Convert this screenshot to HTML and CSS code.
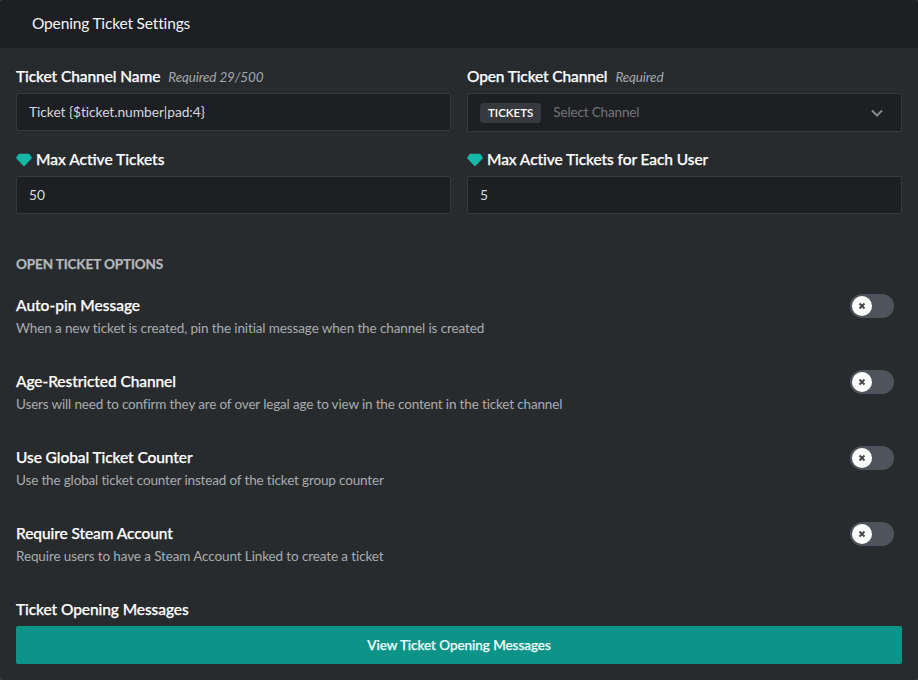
FILE: index.html
```
<!DOCTYPE html>
<html lang="en">
<head>
<meta charset="utf-8">
<title>Opening Ticket Settings</title>
<link rel="stylesheet" href="styles.css">
</head>
<body>
<main class="panel">
  <header class="panel-header">Opening Ticket Settings</header>
  <div class="panel-body">
    <div class="fields">
      <div class="field">
        <div class="label"><span>Ticket Channel Name</span><em class="hint">Required 29/500</em></div>
        <div class="input wide-text">Ticket {$ticket.number|pad:4}</div>
      </div>
      <div class="field">
        <div class="label tight"><span>Open Ticket Channel</span><em class="hint">Required</em></div>
        <div class="input select">
          <span class="tag">TICKETS</span>
          <span class="placeholder">Select Channel</span>
          <svg class="chevron" width="14" height="14" viewBox="0 0 14 14"><path d="M2 4.5 7 9.5 12 4.5"/></svg>
        </div>
      </div>
      <div class="field">
        <div class="label loose"><svg class="gem" width="16" height="14" viewBox="0 0 16 14"><path d="M3.4.8h9.2q.6 0 1 .5l2 3q.4.6 0 1.2L8.8 12.8q-.8.8-1.6 0L.4 5.5q-.4-.6 0-1.2l2-3q.4-.5 1-.5z"/></svg><span>Max Active Tickets</span></div>
        <div class="input">50</div>
      </div>
      <div class="field">
        <div class="label"><svg class="gem" width="16" height="14" viewBox="0 0 16 14"><path d="M3.4.8h9.2q.6 0 1 .5l2 3q.4.6 0 1.2L8.8 12.8q-.8.8-1.6 0L.4 5.5q-.4-.6 0-1.2l2-3q.4-.5 1-.5z"/></svg><span>Max Active Tickets for Each User</span></div>
        <div class="input">5</div>
      </div>
    </div>
    <h2 class="section-title">OPEN TICKET OPTIONS</h2>
    <div class="options">
      <div class="option">
        <div><div class="label loose">Auto-pin Message</div><p class="desc desc-loose">When a new ticket is created, pin the initial message when the channel is created</p></div>
        <span class="toggle"><span class="knob"><svg width="8" height="8" viewBox="0 0 8 8"><path d="M1.5 1.5l5 5M6.5 1.5l-5 5"/></svg></span></span>
      </div>
      <div class="option">
        <div><div class="label">Age-Restricted Channel</div><p class="desc">Users will need to confirm they are of over legal age to view in the content in the ticket channel</p></div>
        <span class="toggle"><span class="knob"><svg width="8" height="8" viewBox="0 0 8 8"><path d="M1.5 1.5l5 5M6.5 1.5l-5 5"/></svg></span></span>
      </div>
      <div class="option">
        <div><div class="label">Use Global Ticket Counter</div><p class="desc">Use the global ticket counter instead of the ticket group counter</p></div>
        <span class="toggle"><span class="knob"><svg width="8" height="8" viewBox="0 0 8 8"><path d="M1.5 1.5l5 5M6.5 1.5l-5 5"/></svg></span></span>
      </div>
      <div class="option">
        <div><div class="label">Require Steam Account</div><p class="desc desc-loose">Require users to have a Steam Account Linked to create a ticket</p></div>
        <span class="toggle"><span class="knob"><svg width="8" height="8" viewBox="0 0 8 8"><path d="M1.5 1.5l5 5M6.5 1.5l-5 5"/></svg></span></span>
      </div>
    </div>
    <div class="label messages-label">Ticket Opening Messages</div>
    <button class="button" type="button">View Ticket Opening Messages</button>
  </div>
</main>
</body>
</html>
```
FILE: styles.css
```
* { box-sizing: border-box; }
body {
  margin: 0;
  background: #3a3d41;
  color: #fff;
  font-family: Lato, "Noto Sans", sans-serif;
}
.panel {
  height: 680px;
  background: #282b2e;
  border-radius: 4px;
  overflow: hidden;
}
.panel-header {
  height: 48px;
  padding: 0 32px;
  background: #1e1f22;
  color: #f4f4f5;
  font-size: 15.5px;
  line-height: 46px;
  letter-spacing: -.16px;
}
.panel-body { padding: 17px 16px 0; }
.fields {
  display: grid;
  grid-template-columns: 1fr 1fr;
  grid-template-rows: 66px 83px;
  row-gap: 17px;
  column-gap: 16px;
}
.label {
  display: flex;
  align-items: center;
  height: 24px;
  padding-bottom: 2px;
  font-size: 15.5px;
  font-weight: 500;
  letter-spacing: -.08px;
  white-space: nowrap;
  -webkit-text-stroke: .25px;
}
.label.tight { letter-spacing: -.13px; }
.label.loose { letter-spacing: 0; }
.hint {
  margin-top: 2px;
  margin-left: 8px;
  color: #a5a8ac;
  font-size: 13.5px;
  font-weight: 400;
  letter-spacing: -.13px;
  -webkit-text-stroke: 0;
}
.gem {
  margin-top: 2px;
  margin-right: 4px;
  fill: #14b8a6;
}
.input {
  display: flex;
  align-items: center;
  height: 38px;
  margin-top: 4px;
  padding: 0 12px 2px;
  background: #1e1f22;
  border: 1px solid #36393e;
  border-radius: 2px;
  color: #d6d8da;
  font-size: 13.8px;
}
.wide-text { letter-spacing: -.06px; }
.select { height: 39px; }
.tag {
  height: 20px;
  margin-top: 2px;
  padding: 0 8px;
  background: #36393e;
  border-radius: 4px;
  color: #fff;
  font-size: 11.5px;
  font-weight: 600;
  line-height: 20px;
}
.placeholder {
  margin-left: 12px;
  color: #72757a;
  font-size: 13.5px;
  letter-spacing: -.15px;
}
.chevron {
  margin-top: 2px;
  margin-left: auto;
  margin-right: 5px;
  fill: none;
  stroke: #85888c;
  stroke-width: 2;
}
.section-title {
  margin: 23px 0 0;
  height: 20px;
  color: #b5b8bc;
  font-size: 13.5px;
  font-weight: 700;
  line-height: 20px;
  letter-spacing: -.12px;
  -webkit-text-stroke: .25px;
}
.options { margin-top: 20px; }
.option {
  display: flex;
  justify-content: space-between;
  height: 76px;
  padding-right: 8px;
}
.desc {
  margin: 0;
  color: #a8abae;
  font-size: 13.5px;
  line-height: 20px;
  letter-spacing: -.155px;
  white-space: nowrap;
}
.desc-loose { letter-spacing: -.115px; }
.toggle {
  width: 44px;
  height: 24px;
  padding: 2px;
  background: #4f545c;
  border-radius: 12px;
}
.knob {
  display: grid;
  place-items: center;
  width: 20px;
  height: 20px;
  background: #fff;
  border-radius: 50%;
}
.knob svg {
  fill: none;
  stroke: #46494f;
  stroke-width: 2;
}
.messages-label { margin-bottom: 4px; }
.button {
  display: block;
  width: 100%;
  height: 38px;
  padding: 0;
  background: #0d9488;
  border: 0;
  border-radius: 2px;
  color: #effffb;
  font: 500 13.5px Lato, "Noto Sans", sans-serif;
  letter-spacing: -.05px;
  -webkit-text-stroke: .25px;
}
```
